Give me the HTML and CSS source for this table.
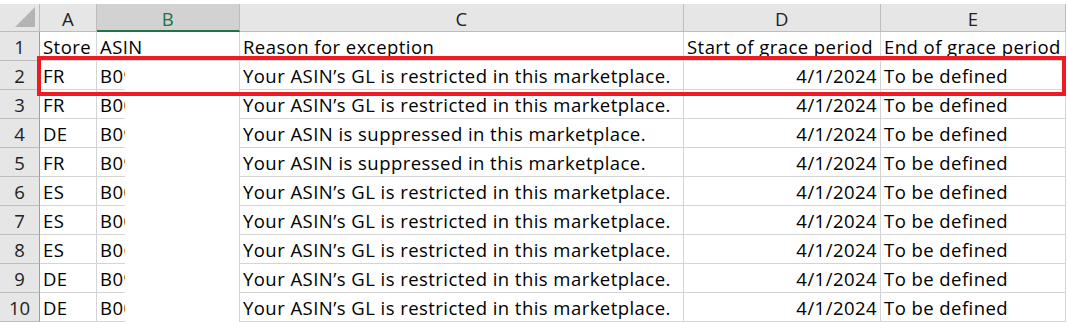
FILE: index.html
```html
<!DOCTYPE html>
<html>
<head>
<meta charset="utf-8">
<link rel="stylesheet" href="styles.css">
</head>
<body>
<div class="sheet">
  <div class="grid">
    <div class="corner"><span class="tri"></span></div>
    <div class="colhdr">A</div>
    <div class="colhdr sel">B</div>
    <div class="colhdr">C</div>
    <div class="colhdr">D</div>
    <div class="colhdr">E</div>

    <div class="rowhdr">1</div>
    <div class="cell">Store</div>
    <div class="cell">ASIN</div>
    <div class="cell">Reason for exception</div>
    <div class="cell">Start of grace period</div>
    <div class="cell">End of grace period</div>

    <div class="rowhdr">2</div>
    <div class="cell">FR</div>
    <div class="cell">B09</div>
    <div class="cell">Your ASIN’s GL is restricted in this marketplace.</div>
    <div class="cell num">4/1/2024</div>
    <div class="cell">To be defined</div>

    <div class="rowhdr">3</div>
    <div class="cell">FR</div>
    <div class="cell">B00</div>
    <div class="cell">Your ASIN’s GL is restricted in this marketplace.</div>
    <div class="cell num">4/1/2024</div>
    <div class="cell">To be defined</div>

    <div class="rowhdr">4</div>
    <div class="cell">DE</div>
    <div class="cell">B09</div>
    <div class="cell">Your ASIN is suppressed in this marketplace.</div>
    <div class="cell num">4/1/2024</div>
    <div class="cell">To be defined</div>

    <div class="rowhdr">5</div>
    <div class="cell">FR</div>
    <div class="cell">B09</div>
    <div class="cell">Your ASIN is suppressed in this marketplace.</div>
    <div class="cell num">4/1/2024</div>
    <div class="cell">To be defined</div>

    <div class="rowhdr">6</div>
    <div class="cell">ES</div>
    <div class="cell">B00</div>
    <div class="cell">Your ASIN’s GL is restricted in this marketplace.</div>
    <div class="cell num">4/1/2024</div>
    <div class="cell">To be defined</div>

    <div class="rowhdr">7</div>
    <div class="cell">ES</div>
    <div class="cell">B00</div>
    <div class="cell">Your ASIN’s GL is restricted in this marketplace.</div>
    <div class="cell num">4/1/2024</div>
    <div class="cell">To be defined</div>

    <div class="rowhdr">8</div>
    <div class="cell">ES</div>
    <div class="cell">B0C</div>
    <div class="cell">Your ASIN’s GL is restricted in this marketplace.</div>
    <div class="cell num">4/1/2024</div>
    <div class="cell">To be defined</div>

    <div class="rowhdr">9</div>
    <div class="cell">DE</div>
    <div class="cell">B09</div>
    <div class="cell">Your ASIN’s GL is restricted in this marketplace.</div>
    <div class="cell num">4/1/2024</div>
    <div class="cell">To be defined</div>

    <div class="rowhdr">10</div>
    <div class="cell">DE</div>
    <div class="cell">B00</div>
    <div class="cell">Your ASIN’s GL is restricted in this marketplace.</div>
    <div class="cell num">4/1/2024</div>
    <div class="cell">To be defined</div>
  </div>
  <div class="redact"></div>
  <div class="highlight"></div>
</div>
</body>
</html>
```
FILE: styles.css
```css
html, body {
  margin: 0;
  padding: 0;
  background: #ffffff;
}

.sheet {
  position: relative;
  padding-top: 4px;
  font-family: "Open Sans", "Lato", sans-serif;
  font-size: 18.5px;
  letter-spacing: 0.45px;
  color: #000;
}

.grid {
  display: grid;
  grid-template-columns: 40px 57px 143px 444px 197px 185px;
  grid-template-rows: 28px repeat(10, 29px);
}

.grid > div {
  box-sizing: border-box;
  border-right: 1px solid #d4d4d4;
  border-bottom: 1px solid #d4d4d4;
  white-space: nowrap;
  overflow: hidden;
  line-height: 1;
}

.corner {
  background: #e6e6e6;
  position: relative;
  border-right-color: #bdbdbd !important;
  border-bottom-color: #bdbdbd !important;
}

.tri {
  position: absolute;
  right: 4px;
  bottom: 4px;
  width: 0;
  height: 0;
  border-left: 20px solid transparent;
  border-bottom: 20px solid #b4b4b4;
}

.colhdr {
  background: #e6e6e6;
  border-right-color: #bdbdbd !important;
  border-bottom-color: #bdbdbd !important;
  color: #222;
  display: flex;
  align-items: flex-end;
  justify-content: center;
  padding-bottom: 3px;
}

.colhdr.sel {
  background: #d2d2d2;
  color: #217346;
  border-bottom: 2px solid #217346 !important;
  padding-bottom: 2px;
}

.rowhdr {
  background: #e6e6e6;
  border-right-color: #9e9e9e !important;
  border-bottom-color: #bdbdbd !important;
  color: #222;
  display: flex;
  align-items: flex-end;
  justify-content: center;
  padding-bottom: 4px;
  letter-spacing: 0;
}

.cell {
  display: flex;
  align-items: flex-end;
  padding: 0 3px 4px 3px;
}

.cell.num {
  justify-content: flex-end;
}

.redact {
  position: absolute;
  left: 125px;
  top: 62px;
  width: 114px;
  height: 260px;
  background: #ffffff;
}

.highlight {
  position: absolute;
  left: 37px;
  top: 56px;
  width: 1029px;
  height: 40px;
  box-sizing: border-box;
  border: 4px solid #ed1c24;
}
```
